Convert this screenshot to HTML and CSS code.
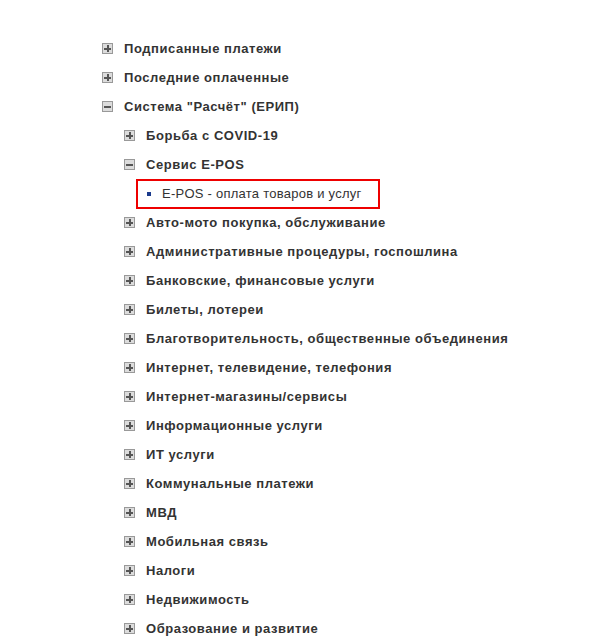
FILE: index.html
```html
<!DOCTYPE html>
<html lang="ru">
<head>
    <meta charset="UTF-8">
    <title>Платежи</title>
    <link rel="stylesheet" href="styles.css">
</head>
<body>
    <ul class="tree">
        <li><div class="node"><span class="toggle plus"></span>Подписанные платежи</div></li>
        <li><div class="node"><span class="toggle plus"></span>Последние оплаченные</div></li>
        <li>
            <div class="node"><span class="toggle minus"></span>Система "Расчёт" (ЕРИП)</div>
            <ul class="tree sub">
                <li><div class="node"><span class="toggle plus"></span>Борьба с COVID-19</div></li>
                <li>
                    <div class="node"><span class="toggle minus"></span>Сервис E-POS</div>
                    <ul class="leaves">
                        <li><a class="leaf selected" href="#"><span class="bullet"></span>E-POS - оплата товаров и услуг</a></li>
                    </ul>
                </li>
                <li><div class="node"><span class="toggle plus"></span>Авто-мото покупка, обслуживание</div></li>
                <li><div class="node"><span class="toggle plus"></span>Административные процедуры, госпошлина</div></li>
                <li><div class="node"><span class="toggle plus"></span>Банковские, финансовые услуги</div></li>
                <li><div class="node"><span class="toggle plus"></span>Билеты, лотереи</div></li>
                <li><div class="node"><span class="toggle plus"></span>Благотворительность, общественные объединения</div></li>
                <li><div class="node"><span class="toggle plus"></span>Интернет, телевидение, телефония</div></li>
                <li><div class="node"><span class="toggle plus"></span>Интернет-магазины/сервисы</div></li>
                <li><div class="node"><span class="toggle plus"></span>Информационные услуги</div></li>
                <li><div class="node"><span class="toggle plus"></span>ИТ услуги</div></li>
                <li><div class="node"><span class="toggle plus"></span>Коммунальные платежи</div></li>
                <li><div class="node"><span class="toggle plus"></span>МВД</div></li>
                <li><div class="node"><span class="toggle plus"></span>Мобильная связь</div></li>
                <li><div class="node"><span class="toggle plus"></span>Налоги</div></li>
                <li><div class="node"><span class="toggle plus"></span>Недвижимость</div></li>
                <li><div class="node"><span class="toggle plus"></span>Образование и развитие</div></li>
            </ul>
        </li>
    </ul>
</body>
</html>
```

FILE: styles.css
```css
body {
    margin: 0;
    padding: 34px 0 0 102px;
    font-family: "Liberation Sans", Arial, sans-serif;
    font-size: 13px;
    color: #333;
    background: #fff;
}
.tree, .leaves {
    list-style: none;
    margin: 0;
    padding: 0;
}
.sub {
    padding-left: 22px;
}
.leaves {
    padding-left: 12px;
}
.node {
    display: flex;
    align-items: center;
    height: 29px;
    font-weight: bold;
    letter-spacing: 0.55px;
    white-space: nowrap;
}
.toggle {
    position: relative;
    width: 11px;
    height: 11px;
    margin-right: 11px;
    box-sizing: border-box;
    border: 1px solid #999;
    background: #dcdcdc;
    flex: none;
}
.toggle::before, .plus::after {
    content: "";
    position: absolute;
    background: #555;
}
.toggle::before {
    left: 1px;
    top: 3.5px;
    width: 7px;
    height: 2px;
}
.plus::after {
    left: 3.5px;
    top: 1px;
    width: 2px;
    height: 7px;
}
.leaf {
    display: inline-flex;
    align-items: center;
    height: 30px;
    padding: 0 16px 0 9px;
    box-sizing: border-box;
    color: #333;
    letter-spacing: 0.25px;
    text-decoration: none;
    white-space: nowrap;
}
.leaf.selected {
    border: 2px solid #e00;
    margin: -0.5px 0;
}
.bullet {
    width: 4px;
    height: 4px;
    background: #1a3a8c;
    margin-right: 11px;
}
```
